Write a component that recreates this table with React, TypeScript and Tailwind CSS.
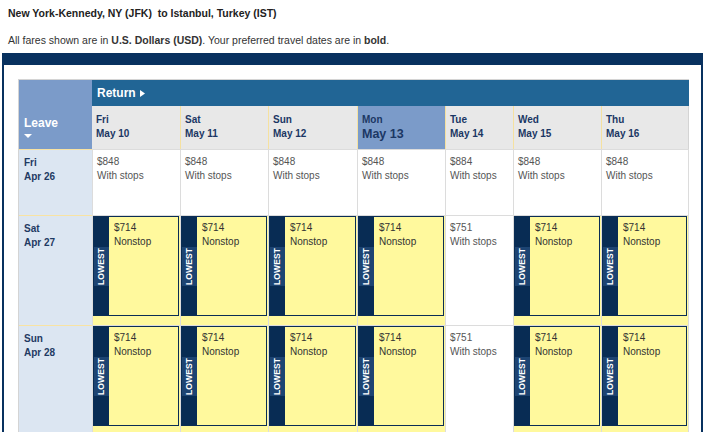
import React from "react";

type Fare = { price: string; note: string; lowest?: boolean };

const returnDays = [
  { day: "Fri", date: "May 10", w: "w-[88px]" },
  { day: "Sat", date: "May 11", w: "w-[88px]" },
  { day: "Sun", date: "May 12", w: "w-[89px]" },
  { day: "Mon", date: "May 13", w: "w-[88px]", preferred: true },
  { day: "Tue", date: "May 14", w: "w-[68px]" },
  { day: "Wed", date: "May 15", w: "w-[88px]" },
  { day: "Thu", date: "May 16", w: "w-[88px]" },
];

const low: Fare = { price: "$714", note: "Nonstop", lowest: true };
const stops751: Fare = { price: "$751", note: "With stops" };

const rows: { day: string; date: string; h: string; fares: Fare[] }[] = [
  {
    day: "Fri",
    date: "Apr 26",
    h: "h-[66px]",
    fares: [
      { price: "$848", note: "With stops" },
      { price: "$848", note: "With stops" },
      { price: "$848", note: "With stops" },
      { price: "$848", note: "With stops" },
      { price: "$884", note: "With stops" },
      { price: "$848", note: "With stops" },
      { price: "$848", note: "With stops" },
    ],
  },
  { day: "Sat", date: "Apr 27", h: "h-[110px]", fares: [low, low, low, low, stops751, low, low] },
  { day: "Sun", date: "Apr 28", h: "h-[110px]", fares: [low, low, low, low, stops751, low, low] },
];

function FareCell({ fare, w, last }: { fare: Fare; w: string; last: boolean }) {
  const edge = last ? "border-r" : "";
  if (!fare.lowest) {
    return (
      <div className={`${w} ${edge} shrink-0 border-l border-t border-[#dcdcdc] bg-white px-[4px] pt-[5px] leading-[14px] text-[#555]`}>
        <div>{fare.price}</div>
        <div>{fare.note}</div>
      </div>
    );
  }
  return (
    <div className={`${w} ${edge} shrink-0 border-l border-t border-[#dcdcdc] bg-[#fff99d] pr-[1px]`}>
      <div className="flex h-[100px] border border-[#0a2d55]">
        <div className="flex w-[15px] shrink-0 items-center justify-center bg-[#082c54]">
          <span className="rotate-180 bg-[#1d4472] px-[1px] py-[2px] text-[8.5px] font-bold leading-[11px] tracking-[0.1px] text-white [writing-mode:vertical-rl]">
            LOWEST
          </span>
        </div>
        <div className="flex-1 pl-[5px] pt-[4px] leading-[14px] text-[#333]">
          <div>{fare.price}</div>
          <div>{fare.note}</div>
        </div>
      </div>
    </div>
  );
}

export default function App() {
  return (
    <div className="min-h-[432px] bg-white font-['Liberation_Sans',Arial,sans-serif] text-[10px] text-[#333]">
      <div className="px-[8px] pt-[7px] text-[10.5px] font-bold leading-[13px] text-[#222]">
        New York-Kennedy, NY (JFK)&nbsp; to Istanbul, Turkey (IST)
      </div>
      <div className="px-[8px] pt-[14px] text-[10.5px] leading-[13px] text-[#333]">
        All fares shown are in <b>U.S. Dollars (USD)</b>. Your preferred travel dates are in <b>bold</b>.
      </div>

      <div className="ml-[2px] mr-[4px] mt-[6px] border-x-[2px] border-t-[12px] border-[#08315f] pl-[14px] pr-[12px] pt-[14px]">
        <div className="w-[671px] border-l border-t border-[#d4d4d4]">
          {/* header */}
          <div className="flex">
            <div className="flex h-[69px] w-[73px] shrink-0 flex-col bg-[#7b9bc9] pl-[5px] pt-[36px] text-white">
              <span className="text-[12px] font-bold leading-[15px]">Leave</span>
              <svg width="8" height="5" viewBox="0 0 8 5" className="mt-[3px]">
                <path d="M0 0h8L4 4z" fill="#fff" />
              </svg>
            </div>
            <div className="flex flex-col">
              <div className="flex h-[26px] items-center bg-[#216595] pl-[5px] text-[12px] font-bold text-white">
                Return
                <svg width="6" height="7" viewBox="0 0 6 7" className="ml-[4px]">
                  <path d="M0 0v7l5-3.5z" fill="#fff" />
                </svg>
              </div>
              <div className="flex h-[43px]">
                {returnDays.map((d, i) => (
                  <div
                    key={d.date}
                    className={`${d.w} shrink-0 ${i > 0 ? "border-l border-[#f5e1a0]" : ""} ${
                      i === returnDays.length - 1 ? "border-r border-r-[#d4d4d4]" : ""
                    } ${d.preferred ? "bg-[#7b9bc9]" : "bg-[#e8e8e8]"} px-[4px] pt-[7px] font-bold leading-[14px] text-[#1b3764]`}
                  >
                    <div>{d.day}</div>
                    <div className={d.preferred ? "text-[12.5px] leading-[15px]" : ""}>{d.date}</div>
                  </div>
                ))}
              </div>
            </div>
          </div>

          {/* rows */}
          {rows.map(r => (
            <div key={r.date} className={`flex ${r.h}`}>
              <div className="w-[73px] shrink-0 border-t border-[#f8e3a3] bg-[#dce6f2] pl-[5px] pt-[6px] font-bold leading-[14px] text-[#1f3a63]">
                <div>{r.day}</div>
                <div>{r.date}</div>
              </div>
              {r.fares.map((f, i) => (
                <FareCell key={i} fare={f} w={returnDays[i].w} last={i === r.fares.length - 1} />
              ))}
            </div>
          ))}
        </div>
      </div>
    </div>
  );
}
